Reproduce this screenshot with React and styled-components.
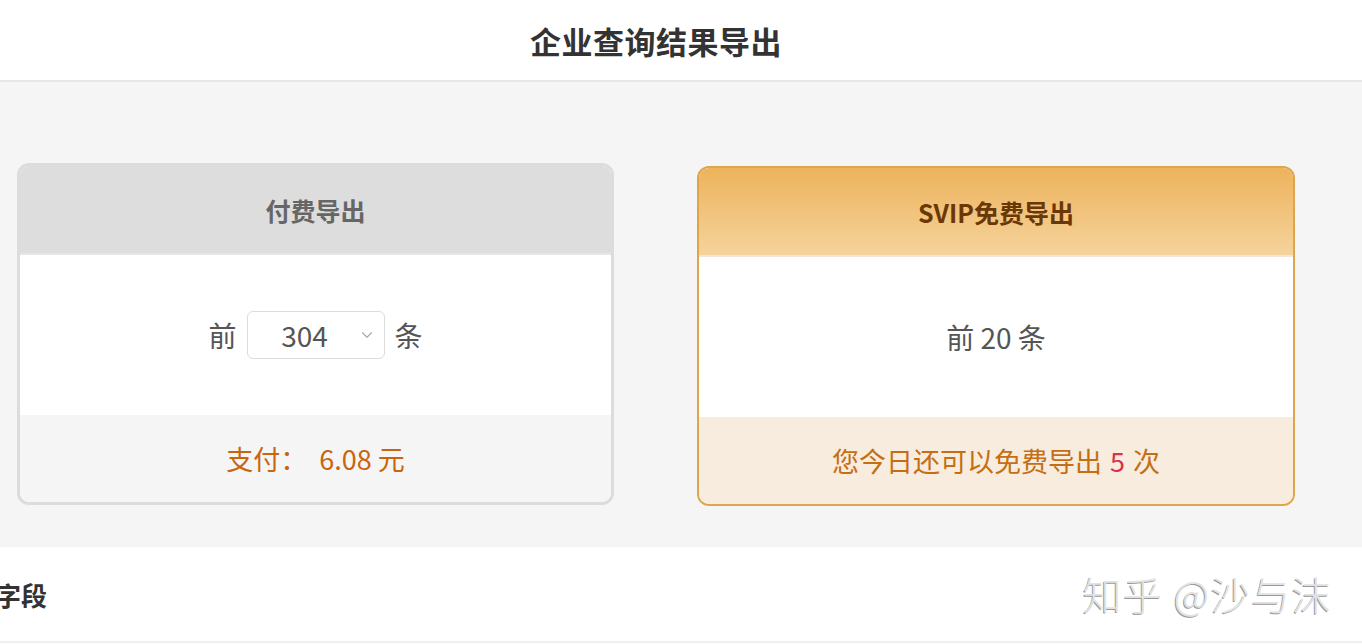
import React from "react";
import styled, { createGlobalStyle } from "styled-components";
import { ChevronDown } from "lucide-react";

const GlobalStyle = createGlobalStyle`
  html, body {
    margin: 0;
    padding: 0;
    background: #fff;
    overflow: hidden;
  }
  body {
    font-family: "Noto Sans CJK SC", "Noto Sans", sans-serif;
    color: #333;
  }
`;

// --- LAYOUT ---
const Viewport = styled.div`
  width: 100vw;
  overflow: hidden;
`;

const Frame = styled.div`
  width: 1412px;
  margin-left: -50px;
`;

const TopBar = styled.header`
  height: 80px;
  display: flex;
  align-items: center;
  justify-content: center;
  border-bottom: 2px solid #e3e8ec;
  background: #fff;
`;

const Title = styled.h1`
  margin: 0;
  font-size: 31px;
  font-weight: 700;
  color: #333;
  letter-spacing: 0.5px;
`;

const Options = styled.section`
  background: #f5f5f5;
  padding: 81px 67px 41px;
  display: grid;
  grid-template-columns: 597px 598px;
  column-gap: 83px;
  align-items: start;
`;

// --- CARD ---
const Card = styled.div`
  border-radius: 12px;
  overflow: hidden;
  display: flex;
  flex-direction: column;
  border: ${(p) => (p.$vip ? "2px solid #dfa54a" : "3px solid #dcdcdc")};
  margin-top: ${(p) => (p.$vip ? "3px" : "0")};
  background: #fff;
`;

const CardHead = styled.div`
  height: 87px;
  display: flex;
  align-items: center;
  justify-content: center;
  font-size: 25px;
  font-weight: 700;
  color: ${(p) => (p.$vip ? "#6b3805" : "#666")};
  background: ${(p) =>
    p.$vip ? "linear-gradient(180deg, #edb35c 0%, #f5d39c 100%)" : "#dddddd"};
  border-bottom: 2px solid ${(p) => (p.$vip ? "#f0e6dc" : "#e4e7ea")};
`;

const CardBody = styled.div`
  height: 160px;
  display: flex;
  align-items: center;
  justify-content: center;
  gap: 10px;
  font-size: 28px;
  color: #555;
`;

const CardFoot = styled.div`
  height: 87px;
  display: flex;
  align-items: center;
  justify-content: center;
  font-size: 27px;
  color: ${(p) => (p.$vip ? "#c46f14" : "#c9650c")};
  background: ${(p) => (p.$vip ? "#f8ecdf" : "#f5f5f5")};
  white-space: pre;
`;

const Count = styled.span`
  color: #d8334a;
  margin: 0 8px;
`;

const Select = styled.div`
  width: 138px;
  height: 48px;
  box-sizing: border-box;
  border: 1.5px solid #dcdcdc;
  border-radius: 6px;
  display: flex;
  align-items: center;
  justify-content: center;
  position: relative;
  background: #fff;
  font-size: 28px;
  color: #555;

  span {
    margin-right: 22px;
  }

  svg {
    position: absolute;
    right: 8px;
    top: 14px;
    color: #a8a8a8;
  }
`;

// --- FIELDS ---
const Fields = styled.section`
  position: relative;
  height: 94px;
  display: flex;
  align-items: center;
  padding-left: 45px;
  background: #fff;
  border-bottom: 2px solid #eef0f2;
`;

const FieldsTitle = styled.h2`
  margin: 0;
  font-size: 26px;
  font-weight: 700;
  color: #333;
`;

const Watermark = styled.div`
  position: absolute;
  right: 30px;
  top: 18px;
  font-size: 39px;
  font-weight: 300;
  letter-spacing: 1.5px;
  color: #e2e2e2;
  text-shadow: -1px 1px 0 #9a9a9a;
  white-space: pre;
`;

export default function App() {
  return (
    <Viewport>
      <GlobalStyle />
      <Frame>
        <TopBar>
          <Title>企业查询结果导出</Title>
        </TopBar>

        <Options>
          <Card>
            <CardHead>付费导出</CardHead>
            <CardBody>
              前
              <Select>
                <span>304</span>
                <ChevronDown size={18} strokeWidth={1.5} />
              </Select>
              条
            </CardBody>
            <CardFoot>支付：  6.08 元</CardFoot>
          </Card>

          <Card $vip>
            <CardHead $vip>SVIP免费导出</CardHead>
            <CardBody>前 20 条</CardBody>
            <CardFoot $vip>
              您今日还可以免费导出<Count>5</Count>次
            </CardFoot>
          </Card>
        </Options>

        <Fields>
          <FieldsTitle>字段</FieldsTitle>
          <Watermark>知乎 @沙与沫</Watermark>
        </Fields>
      </Frame>
    </Viewport>
  );
}
